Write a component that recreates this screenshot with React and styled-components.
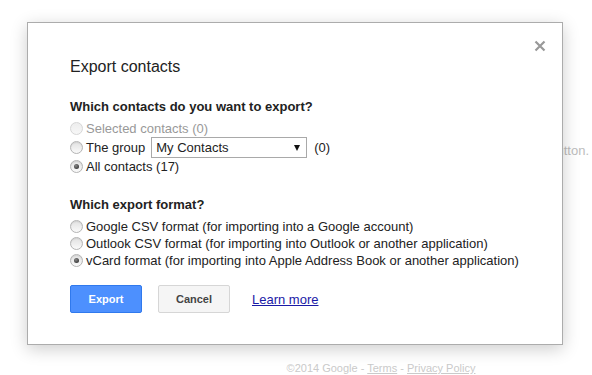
import React, { useState } from 'react';
import styled, { createGlobalStyle, css } from 'styled-components';

const GlobalStyle = createGlobalStyle`
  html, body {
    margin: 0;
    padding: 0;
    background: #fff;
  }
  body {
    font-family: "Liberation Sans", Arial, sans-serif;
    color: #222;
  }
`;

const Page = styled.div`
  position: relative;
  width: 592px;
  height: 375px;
  overflow: hidden;
  display: flex;
`;

const SideColumn = styled.div`
  width: 168px;
  flex-shrink: 0;
`;

const MainColumn = styled.div`
  flex: 1;
  display: flex;
  flex-direction: column;
  min-width: 0;
`;

const HintLine = styled.div`
  margin-top: 143px;
  display: flex;
  justify-content: flex-end;
  padding-right: 3px;
  font-size: 13px;
  line-height: 16px;
  color: #bdbdbd;
  white-space: nowrap;
`;

const Footer = styled.div`
  margin-top: auto;
  padding-bottom: 0;
  text-align: center;
  font-size: 11px;
  line-height: 14px;
  color: #cacaca;
  padding-left: 2px;
`;

const FooterLink = styled.a`
  color: #cacaca;
  text-decoration: underline;
`;

const Dialog = styled.div`
  position: absolute;
  left: 27px;
  top: 22px;
  width: 536px;
  box-sizing: border-box;
  background: #fff;
  border: 1px solid #acacac;
  box-shadow: 0 4px 16px rgba(0, 0, 0, 0.2);
  padding: 33px 42px 31px 42px;
`;

const CloseButton = styled.button`
  position: absolute;
  top: 15px;
  right: 14px;
  width: 16px;
  height: 16px;
  padding: 0;
  border: 0;
  background: transparent;
  cursor: pointer;
  display: flex;
  align-items: center;
  justify-content: center;
`;

const Title = styled.div`
  font-size: 16px;
  line-height: 21px;
  color: #222;
`;

const Section = styled.div`
  margin-top: 22px;
`;

const SectionHeading = styled.div`
  font-size: 13px;
  line-height: 16px;
  font-weight: bold;
  color: #222;
  margin-bottom: 5px;
`;

const OptionRow = styled.label`
  display: flex;
  align-items: center;
  min-height: ${({ tall }) => (tall ? '21px' : '17px')};
  font-size: 13px;
  line-height: 17px;
  color: ${({ disabled }) => (disabled ? '#999' : '#222')};
  white-space: nowrap;
`;

const Radio = styled.input.attrs({ type: 'radio' })`
  appearance: none;
  -webkit-appearance: none;
  width: 13px;
  height: 13px;
  margin: -1px 3px 0 0;
  border-radius: 50%;
  box-sizing: border-box;
  border: 1px solid #b4b4b4;
  background: linear-gradient(to bottom, #e2e2e2 0%, #ececec 45%, #fafafa 100%);
  box-shadow: inset 0 1px 1px rgba(0, 0, 0, 0.08);
  flex-shrink: 0;
  position: relative;

  &:checked::after {
    content: '';
    position: absolute;
    left: 3px;
    top: 3px;
    width: 5px;
    height: 5px;
    border-radius: 50%;
    background: radial-gradient(circle at 40% 35%, #888 0%, #3a3a3a 75%);
  }

  ${({ disabled }) =>
    disabled &&
    css`
      border-color: #d6d6d6;
      background: linear-gradient(to bottom, #ededed 0%, #f7f7f7 100%);
      box-shadow: none;
    `}
`;

const SelectWrap = styled.span`
  position: relative;
  display: inline-flex;
  margin: 0 7px 0 6px;
`;

const GroupSelect = styled.select`
  appearance: none;
  -webkit-appearance: none;
  width: 156px;
  height: 21px;
  box-sizing: border-box;
  border: 1px solid #a9a9a9;
  border-radius: 0;
  background: #fff;
  padding: 0 18px 0 4px;
  font-family: "Liberation Sans", Arial, sans-serif;
  font-size: 13px;
  color: #222;
  outline: none;
`;

const SelectArrow = styled.span`
  position: absolute;
  right: 7px;
  top: 8px;
  width: 0;
  height: 0;
  border-left: 3.5px solid transparent;
  border-right: 3.5px solid transparent;
  border-top: 6px solid #111;
  pointer-events: none;
`;

const Actions = styled.div`
  display: flex;
  align-items: center;
  gap: 16px;
  margin-top: 16px;
`;

const Button = styled.button`
  width: 72px;
  height: 28px;
  box-sizing: border-box;
  border-radius: 2px;
  font-family: "Liberation Sans", Arial, sans-serif;
  font-size: 11px;
  font-weight: bold;
  cursor: pointer;
  padding: 0;
  ${({ primary }) =>
    primary
      ? css`
          background: #4d90fe;
          border: 1px solid #3079ed;
          color: #fff;
        `
      : css`
          background: #f5f5f5;
          border: 1px solid #d6d6d6;
          color: #444;
        `}
`;

const LearnMore = styled.a`
  margin-left: 6px;
  font-size: 13px;
  color: #1a1aa6;
  text-decoration: underline;
`;

const CloseIcon = () => (
  <svg width="12" height="12" viewBox="0 0 12 12">
    <path d="M1.5 1.5 L10.5 10.5 M10.5 1.5 L1.5 10.5" stroke="#999" strokeWidth="2.2" />
  </svg>
);

const contactOptions = ['selected', 'group', 'all'];

const formats = [
  { id: 'google', label: 'Google CSV format (for importing into a Google account)' },
  { id: 'outlook', label: 'Outlook CSV format (for importing into Outlook or another application)' },
  { id: 'vcard', label: 'vCard format (for importing into Apple Address Book or another application)' },
];

export default function App() {
  const [which, setWhich] = useState(contactOptions[2]);
  const [format, setFormat] = useState('vcard');

  return (
    <>
      <GlobalStyle />
      <Page>
        <SideColumn />
        <MainColumn>
          <HintLine>Click the New contact button.</HintLine>
          <Footer>
            ©2014 Google - <FooterLink href="#">Terms</FooterLink> -{' '}
            <FooterLink href="#">Privacy Policy</FooterLink>
          </Footer>
        </MainColumn>

        <Dialog role="dialog">
          <CloseButton aria-label="Close">
            <CloseIcon />
          </CloseButton>
          <Title>Export contacts</Title>

          <Section>
            <SectionHeading>Which contacts do you want to export?</SectionHeading>
            <OptionRow disabled>
              <Radio name="which" disabled checked={which === 'selected'} onChange={() => setWhich('selected')} />
              Selected contacts (0)
            </OptionRow>
            <OptionRow tall>
              <Radio name="which" checked={which === 'group'} onChange={() => setWhich('group')} />
              The group
              <SelectWrap>
                <GroupSelect defaultValue="my">
                  <option value="my">My Contacts</option>
                </GroupSelect>
                <SelectArrow />
              </SelectWrap>
              (0)
            </OptionRow>
            <OptionRow>
              <Radio name="which" checked={which === 'all'} onChange={() => setWhich('all')} />
              All contacts (17)
            </OptionRow>
          </Section>

          <Section>
            <SectionHeading>Which export format?</SectionHeading>
            {formats.map((f) => (
              <OptionRow key={f.id}>
                <Radio name="format" checked={format === f.id} onChange={() => setFormat(f.id)} />
                {f.label}
              </OptionRow>
            ))}
          </Section>

          <Actions>
            <Button primary>Export</Button>
            <Button>Cancel</Button>
            <LearnMore href="#">Learn more</LearnMore>
          </Actions>
        </Dialog>
      </Page>
    </>
  );
}
